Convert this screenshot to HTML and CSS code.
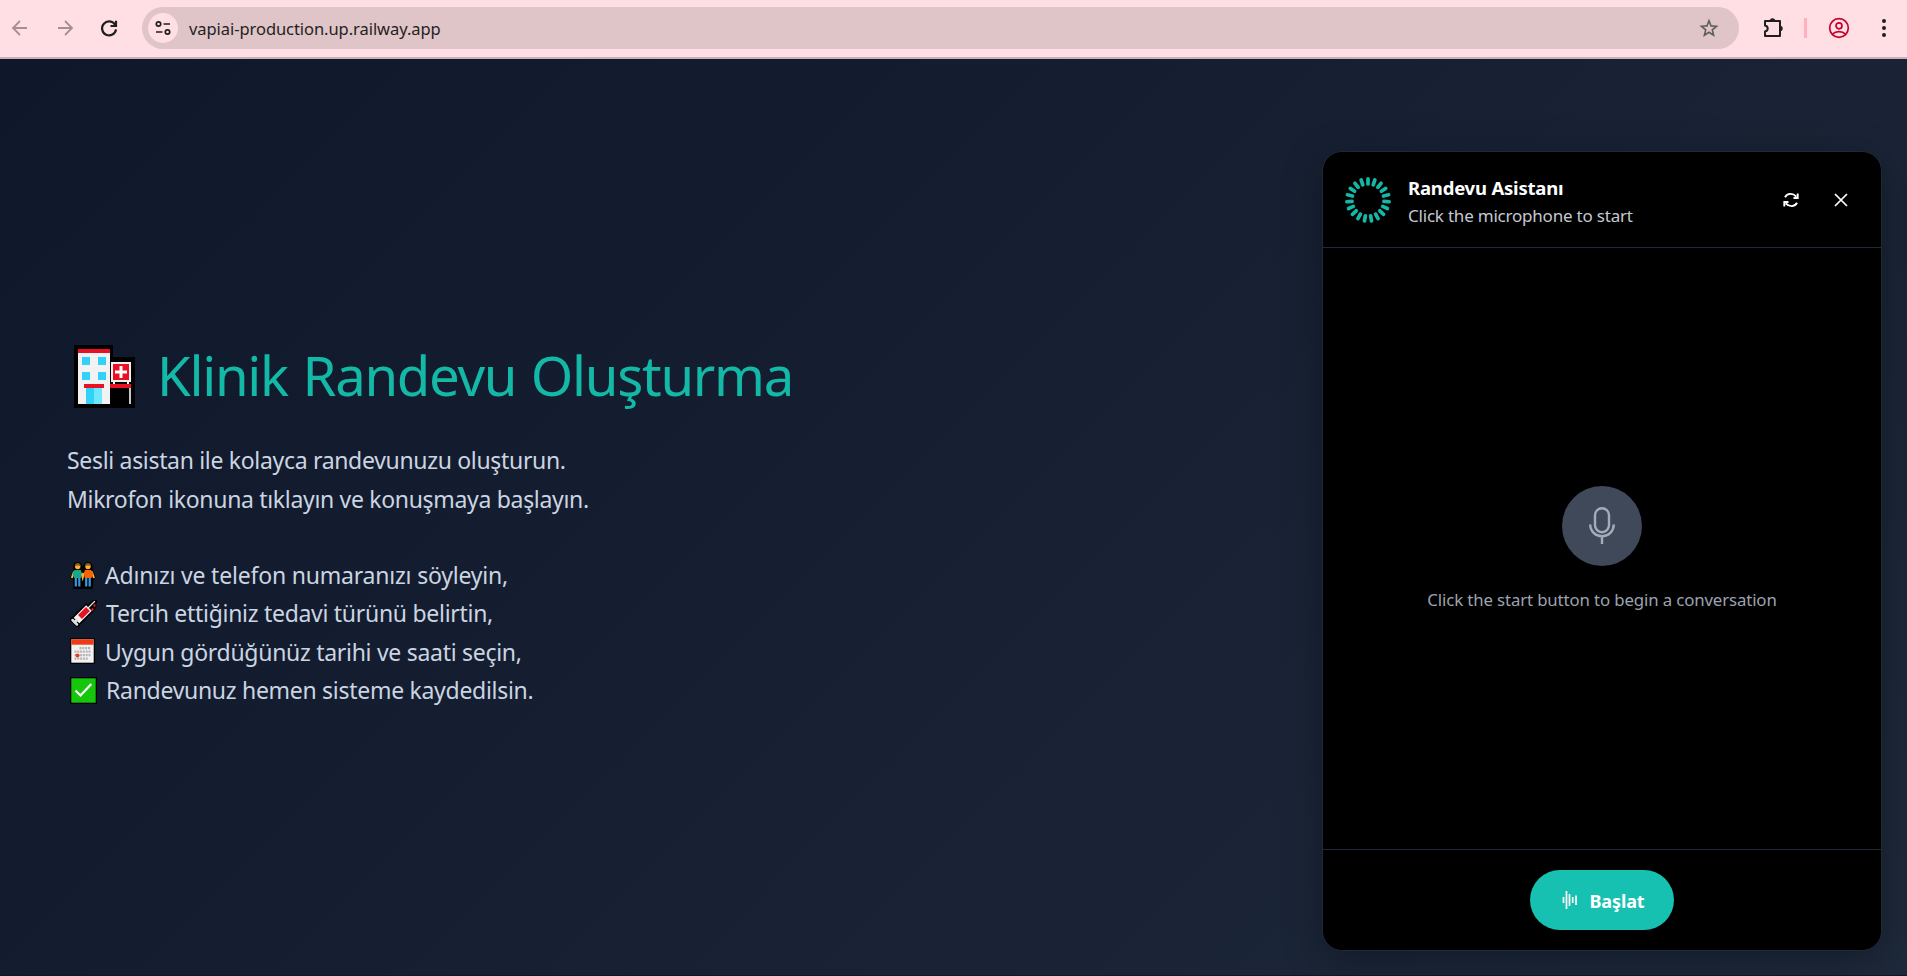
FILE: index.html
```html
<!DOCTYPE html>
<html lang="tr">
<head>
<meta charset="utf-8">
<title>Klinik Randevu</title>
<link rel="stylesheet" href="styles.css">
</head>
<body>
<header class="toolbar">
  <svg class="tool-icon back" viewBox="0 0 20 20"><path d="M17 10H3M10 3 3 10l7 7"/></svg>
  <svg class="tool-icon forward" viewBox="0 0 20 20"><path d="M3 10h14M10 3l7 7-7 7"/></svg>
  <svg class="tool-icon reload" viewBox="0 0 20 20"><path d="M16.100 6.800A7 7 0 1 0 17 11.300M17 2.700v5.300h-5.500"/></svg>
  <div class="address">
    <span class="site-info"><svg viewBox="0 0 18 18"><circle cx="4.500" cy="5" r="2.200"/><path d="M9.500 5H16M2 13h6.500"/><circle cx="13.500" cy="13" r="2.200"/></svg></span>
    <span class="url">vapiai-production.up.railway.app</span>
    <svg class="star" viewBox="0 0 20 20"><path d="M10 2.800l2 5.100 5.500.4-4.200 3.500 1.300 5.400L10 14.300l-4.600 2.900 1.300-5.400-4.200-3.500 5.500-.4z"/></svg>
  </div>
  <svg class="puzzle" viewBox="0 0 22 22"><path class="shape" d="M3 4h15v15H3v-4.500c3.600-.6 3.600-5.400 0-6z"/><path class="knob" d="M7.800 4a2.700 2.700 0 0 1 5.400 0zM18 8.800a2.700 2.700 0 0 1 0 5.400z"/></svg>
  <span class="separator"></span>
  <svg class="profile" viewBox="0 0 22 22"><circle cx="11" cy="11" r="9.300"/><circle cx="11" cy="8.800" r="3"/><path d="M4.500 17.200c3.400-3.400 9.600-3.400 13 0"/></svg>
  <svg class="dots" viewBox="0 0 6 20"><circle cx="3" cy="3" r="2"/><circle cx="3" cy="10" r="2"/><circle cx="3" cy="17" r="2"/></svg>
</header>
<main class="page">
  <section class="intro">
    <h1 class="title">
      <svg class="hospital" viewBox="0 0 61 63"><path fill="#000" d="M0 0h39v12h22v51H0z"/><path fill="#f2f2f2" d="M4 4h32v55H4z"/><path fill="#e81224" d="M4 4h32v4H4zM10 39h20v4H10zM36 39h21v4H36z"/><path fill="#31d2f7" d="M8 12h8v8H8zM24 12h8v8h-8zM8 27h8v8H8zM24 27h8v8h-8zM12 43h8v16h-8z"/><path fill="#6de8ff" d="M20 43h8v16h-8z"/><path fill="#f2f2f2" d="M37 17h20v20H37z"/><path fill="#e81224" d="M39 19h16v16H39z"/><path fill="#fff" d="M45.500 21h3v4.500H53v3h-4.500V33h-3v-4.500H41v-3h4.500zM39 37h2v2h-2zM53 37h2v2h-2z"/><path fill="#c5c5c5" d="M55 43h2v16h-2z"/></svg>
      <span class="title-text">Klinik Randevu Oluşturma</span>
    </h1>
    <p class="lead">Sesli asistan ile kolayca randevunuzu oluşturun.<br>Mikrofon ikonuna tıklayın ve konuşmaya başlayın.</p>
    <ul class="steps">
      <li class="people"><svg class="emoji" viewBox="0 0 27 27"><path fill="#000" d="M3.500 3Q4 0 7.500 0t4.300 3q1 1 2 0Q15 0 18 0t4.500 3l.3 4.500 2.700 7.500-2 3-1 9H3.500l-.5-9-3-2.500L3 8z"/><path stroke="#ffb02e" stroke-width="2" d="M4 9.500 1.800 16M21.700 9.500 24 16M11.500 11l1.200 4.500 1.200-4.500"/><circle cx="7.700" cy="4.500" r="2.700" fill="#ffb02e"/><circle cx="18" cy="4.500" r="2.700" fill="#ffb02e"/><path fill="#8a5a1e" d="M4.800 4.300q0-3.300 2.900-3.300t2.900 3.300q-2.900-1.600-5.800 0zM15.100 4.300q0-3.300 2.900-3.300t2.900 3.300q-2.900-1.600-5.800 0z"/><path fill="#14a88c" d="M4.500 8h6.200l1.200 3-1 5H4.200l-1.700-4z"/><path fill="#f7630c" d="M15 8h6.200l2 4-1.700 4h-6.700l-1-5z"/><path stroke="#3a96dd" stroke-width="2.200" d="M5.800 16v8.500M9.300 16v8.500M16.200 16v8.500M19.700 16v8.500"/></svg><span>Adınızı ve telefon numaranızı söyleyin,</span></li>
      <li class="offset"><svg class="emoji" viewBox="0 0 27 27"><g fill="none" stroke-linecap="round"><path stroke="#000" stroke-width="5" d="M2.500 19.500l5 5M18 8 25 1.500M24 6l-2 3"/><path stroke="#000" stroke-width="11" stroke-linecap="butt" d="M4 23 20 7"/><path stroke="#f2f2f2" stroke-width="8" stroke-linecap="butt" d="M6.500 20.500 19 8"/><path stroke="#e81224" stroke-width="5.500" stroke-linecap="butt" d="M10 17 18 9"/><path stroke="#ddd" stroke-width="3" stroke-linecap="butt" d="M4 23l3.500-3.500"/><path stroke="#ddd" stroke-width="1.300" d="M18 8l6.500-6.500"/><path stroke="#ddd" stroke-width="2.500" d="M2.500 20l4.500 4.500"/><path stroke="#e81224" stroke-width="2" d="M24.500 5v1M22.500 9v1"/></g></svg><span>Tercih ettiğiniz tedavi türünü belirtin,</span></li>
      <li><svg class="emoji" viewBox="0 0 27 27"><path fill="#000" d="M0 0h25v26H0z"/><path fill="#f2f2f2" d="M1.300 1.300h22.400v23.400H1.300z"/><path fill="#f03a17" d="M1.300 1.300h22.400v5.400H1.300z"/><path stroke="#b5b5b5" stroke-width="2.300" stroke-dasharray="2 .8" d="M9.500 10.200H21M4.500 13.600H21M4.500 17.200H21M4.500 20.600h14"/><circle cx="7.500" cy="17.500" r="2" fill="#f03a17"/></svg><span>Uygun gördüğünüz tarihi ve saati seçin,</span></li>
      <li class="offset"><svg class="emoji" viewBox="0 0 27 27"><path fill="#000" d="M0 0h27v27H0z"/><path fill="#16c60c" d="M1.300 1.300h24.400v24.400H1.300z"/><path fill="none" stroke="#fff" stroke-width="2.200" d="M5.500 13.500l5 5L21.300 7"/></svg><span>Randevunuz hemen sisteme kaydedilsin.</span></li>
    </ul>
  </section>
  <aside class="widget">
    <div class="widget-head">
      <svg class="ring" viewBox="-24 -24 48 48">
        <defs><path id="tick" d="M0-21.200v5.200"/></defs>
        <use href="#tick"/><use href="#tick" transform="rotate(18.950)"/><use href="#tick" transform="rotate(37.890)"/><use href="#tick" transform="rotate(56.840)"/><use href="#tick" transform="rotate(75.790)"/><use href="#tick" transform="rotate(94.740)"/><use href="#tick" transform="rotate(113.680)"/><use href="#tick" transform="rotate(132.630)"/><use href="#tick" transform="rotate(151.580)"/><use href="#tick" transform="rotate(170.530)"/><use href="#tick" transform="rotate(189.470)"/><use href="#tick" transform="rotate(208.420)"/><use href="#tick" transform="rotate(227.370)"/><use href="#tick" transform="rotate(246.320)"/><use href="#tick" transform="rotate(265.260)"/><use href="#tick" transform="rotate(284.210)"/><use href="#tick" transform="rotate(303.160)"/><use href="#tick" transform="rotate(322.110)"/><use href="#tick" transform="rotate(341.050)"/>
      </svg>
      <div class="names"><strong class="name">Randevu Asistanı</strong><span class="status">Click the microphone to start</span></div>
      <svg class="refresh" viewBox="0 0 16 16"><path d="M2 5.300C4.300 1 9.700.8 13.300 4.700M14.700 1.500v4.500H10.500M14 10.700c-2.300 4.300-7.700 4.500-11.300.6M1.300 14.500V10H5.500"/></svg>
      <svg class="close" viewBox="0 0 14 14"><path d="M1 1l12 12M13 1 1 13"/></svg>
    </div>
    <div class="widget-body">
      <span class="mic"><svg viewBox="0 0 26 38"><rect x="6" y="1.200" width="14" height="24" rx="7"/><path d="M1.200 17.500a11.800 11.800 0 0 0 23.600 0M13 30v7"/></svg></span>
      <span class="hint">Click the start button to begin a conversation</span>
    </div>
    <div class="widget-foot">
      <button class="start"><svg viewBox="0 0 16 18"><path d="M1.500 6v6M4.500 0v18M7.500 3v12M10.700 6v6M14 4.500v9.500"/></svg><span class="start-text">Başlat</span></button>
    </div>
  </aside>
</main>
</body>
</html>
```
FILE: styles.css
```css
* { box-sizing: border-box; }
body { margin: 0; height: 976px; overflow: hidden; display: flex; flex-direction: column; background: #0f172a; color: #cbd5e1; font-family: "Segoe UI", "Noto Sans", sans-serif; }
svg { display: block; flex: none; fill: none; }
.toolbar { height: 59px; flex: none; display: flex; align-items: center; padding: 1px 20px 2px 10px; background: #ffdee4; border-bottom: 2px solid #c9b0b4; }
.tool-icon { width: 20px; height: 20px; margin-right: 24.500px; stroke: #a58f94; stroke-width: 1.8; }
.reload { stroke: #1f1f1f; stroke-width: 2.2; margin-right: 23px; }
.address { flex: 1; height: 42px; border-radius: 21px; background: #dfc4c8; display: flex; align-items: center; padding: 0 20px 0 6px; }
.site-info { width: 30px; height: 30px; border-radius: 50%; background: #ffdee4; display: grid; place-items: center; margin-right: 11px; }
.site-info svg { width: 18px; height: 18px; stroke: #1f1f1f; stroke-width: 1.7; }
.url { color: #1f1f1f; font-size: 16.500px; letter-spacing: -.06px; flex: none; padding-top: 1px; }
.star { width: 20px; height: 20px; margin-left: auto; stroke: #5e5e5e; stroke-width: 1.6; }
.puzzle { width: 22px; height: 22px; margin-left: 23px; }
.puzzle .shape { stroke: #1f1f1f; stroke-width: 2; stroke-linejoin: round; }
.puzzle .knob { fill: #1f1f1f; }
.separator { width: 3px; height: 20px; background: #ffb0bb; margin: 0 21px 0 20px; }
.profile { width: 22px; height: 22px; stroke: #c5002c; stroke-width: 1.7; }
.dots { width: 6px; height: 20px; margin-left: 31px; fill: #1f1f1f; }
.page { flex: 1; background: linear-gradient(135deg, #0f172a, #1e293b); border-bottom: 1px solid #15162a; display: flex; justify-content: space-between; padding: 92px 25px 0 67px; }
.intro { padding-top: 193px; }
.title { margin: 0; display: flex; align-items: center; height: 64px; gap: 22px; padding-left: 7px; color: #14b8a6; font-weight: 400; font-size: 54.500px; letter-spacing: -1.300px; word-spacing: 1.800px; }
.hospital { width: 61px; height: 63px; }
.title-text { white-space: nowrap; padding-bottom: 3px; }
.lead { margin: 33px 0 0; font-size: 23px; line-height: 39px; letter-spacing: -.32px; white-space: nowrap; }
.steps { list-style: none; margin: 37px 0 0; padding: 0; font-size: 23px; line-height: 38.400px; letter-spacing: -.29px; }
.steps li { display: flex; align-items: center; height: 38.400px; gap: 8px; padding-left: 3px; white-space: nowrap; }
.steps .people { letter-spacing: -.2px; }
.steps .offset { gap: 9px; }
.emoji { width: 27px; height: 27px; }
.widget { width: 560px; height: 800px; background: #000; border: 1px solid #1f2937; border-radius: 20px; box-shadow: 0 10px 40px rgba(0, 0, 0, .3); display: flex; flex-direction: column; }
.widget-head { height: 96px; flex: none; border-bottom: 1px solid #1f2937; display: flex; align-items: center; padding: 0 33px 0 21px; }
.ring { width: 48px; height: 48px; margin-right: 16px; stroke: #14b8a6; stroke-width: 3.700; stroke-linecap: round; }
.names { display: flex; flex-direction: column; flex: 1; padding-top: 4px; }
.name { color: #fff; font-size: 18.500px; line-height: 28px; font-weight: 700; letter-spacing: -.2px; }
.status { color: #c4c8d0; font-size: 17px; line-height: 27px; letter-spacing: -.21px; }
.refresh { width: 16px; height: 16px; stroke: #fff; stroke-width: 1.900; }
.close { width: 14px; height: 14px; margin-left: 35px; stroke: #fff; stroke-width: 1.7; }
.widget-body { flex: 1; display: flex; flex-direction: column; align-items: center; padding-top: 238px; }
.mic { width: 80px; height: 80px; border-radius: 50%; background: #3f495a; display: grid; place-items: center; }
.mic svg { width: 26px; height: 38px; stroke: #a3adba; stroke-width: 2.400; }
.hint { margin-top: 20px; color: #9ca3af; font-size: 16.800px; line-height: 27px; letter-spacing: -.12px; }
.widget-foot { height: 101px; border-top: 1px solid #1f2937; display: flex; justify-content: center; padding-top: 20px; }
.start { width: 144px; height: 60px; border: 0; border-radius: 30px; background: #17c1b1; color: #fff; display: flex; align-items: center; justify-content: center; gap: 11px; font-family: inherit; font-size: 18px; font-weight: 700; letter-spacing: -.1px; padding: 0 0 0 3px; }
.start svg { width: 16px; height: 18px; stroke: #fff; stroke-width: 1.700; }
.start-text { padding-top: 2px; }
```
